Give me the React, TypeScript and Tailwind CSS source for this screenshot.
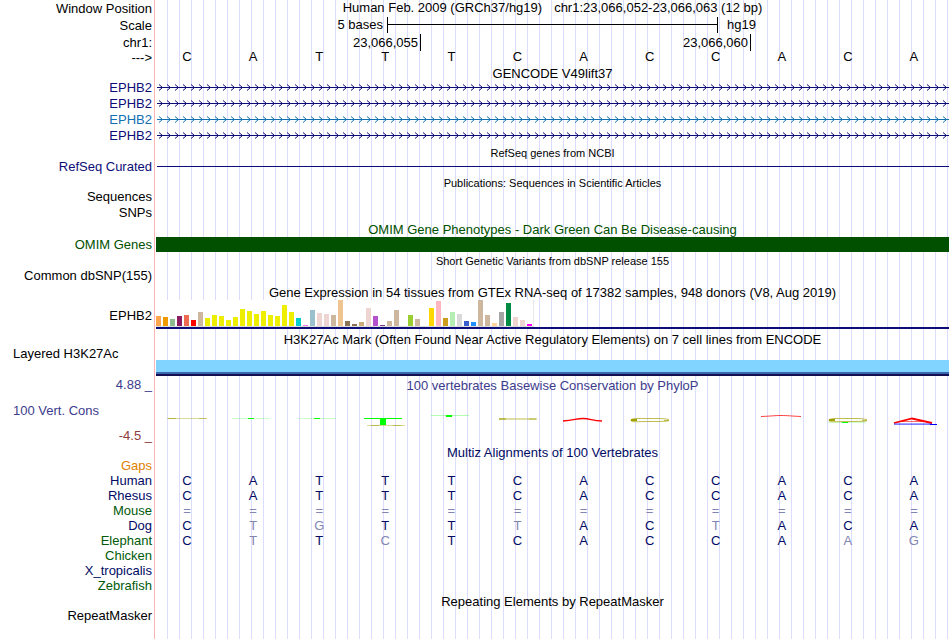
import { useId, type ReactNode } from "react";
import clsx from "clsx";

const NAVY = "#0c0c78";

const referenceBases = "CATTTCACCACA".split("");

const alignments = [
  { name: "Gaps", color: "text-[#e08000]", bases: "" },
  { name: "Human", color: "text-[#000a64]", bases: "CATTTCACCACA" },
  { name: "Rhesus", color: "text-[#000a64]", bases: "CATTTCACCACA" },
  { name: "Mouse", color: "text-[#005a0a]", bases: "============" },
  { name: "Dog", color: "text-[#000a64]", bases: "CtgTTtACtACA" },
  { name: "Elephant", color: "text-[#005a0a]", bases: "CtTcTCACCAag" },
  { name: "Chicken", color: "text-[#005a0a]", bases: "" },
  { name: "X_tropicalis", color: "text-[#000a64]", bases: "" },
  { name: "Zebrafish", color: "text-[#005a0a]", bases: "" },
];

const transcripts = [
  { color: NAVY, label: "text-[#0c0c78]" },
  { color: NAVY, label: "text-[#0c0c78]" },
  { color: "#1270b0", label: "text-[#1270b0]" },
  { color: NAVY, label: "text-[#0c0c78]" },
];

// Median expression per tissue: [colour, height in pixels]
const tissues: [string, number][] = [
  ["#ffa54f", 10], ["#ee9a00", 9], ["#8fbc8f", 7], ["#8b1c62", 10], ["#ee6a50", 11], ["#ff0000", 6],
  ["#cdb79e", 14], ["#eeee00", 8], ["#eeee00", 11], ["#eeee00", 10], ["#eeee00", 6], ["#eeee00", 9],
  ["#eeee00", 17], ["#eeee00", 15], ["#eeee00", 12], ["#eeee00", 15], ["#eeee00", 11], ["#eeee00", 10],
  ["#eeee00", 21], ["#eeee00", 14], ["#00cdcd", 8], ["#ee82ee", 1], ["#9ac0cd", 16], ["#eed5d2", 13],
  ["#eed5d2", 12], ["#cdb79e", 11], ["#eec591", 26], ["#8b7355", 5], ["#8b7355", 2], ["#cdaa7d", 4],
  ["#eed5d2", 18], ["#b452cd", 10], ["#7a378b", 1], ["#cdb79e", 5], ["#cdb79e", 16], ["#cdb79e", 0],
  ["#9acd32", 11], ["#cdb79e", 7], ["#7a67ee", 0], ["#ffd700", 18], ["#ffb6c1", 25], ["#cd9b1d", 8],
  ["#b4eeb4", 14], ["#d9d9d9", 12], ["#3a5fcd", 5], ["#1e90ff", 4], ["#cdb79e", 26], ["#cdb79e", 11],
  ["#ffd39b", 3], ["#a6a6a6", 14], ["#008b45", 23], ["#eed5d2", 9], ["#eed5d2", 6], ["#ff00ff", 2],
];

function Row({
  label,
  labelClass,
  className,
  children,
}: {
  label?: string;
  labelClass?: string;
  className: string;
  children?: ReactNode;
}) {
  return (
    <div className={clsx("flex", className)}>
      <div className={clsx("flex w-[156px] shrink-0 items-center justify-end pr-1 whitespace-pre", labelClass)}>
        {label}
      </div>
      <div className="min-w-0 flex-1">{children}</div>
    </div>
  );
}

function Title({
  children,
  small,
  height = "h-4",
  className,
  label,
  labelClass,
}: {
  children: ReactNode;
  small?: boolean;
  height?: string;
  className?: string;
  label?: string;
  labelClass?: string;
}) {
  return (
    <Row className={height} label={label} labelClass={labelClass}>
      <h2 className={clsx("text-center leading-[18px] whitespace-nowrap", small && "text-[11px]", className)}>
        {children}
      </h2>
    </Row>
  );
}

function StrandLine({ color }: { color: string }) {
  const id = useId();
  return (
    <svg className="block h-4 w-full" aria-hidden="true">
      <defs>
        <pattern id={id} x="3" y="0" width="8" height="16" patternUnits="userSpaceOnUse">
          <path d="M0 4.5l3.5 3l-3.5 3" fill="none" stroke={color} strokeWidth="1" />
        </pattern>
      </defs>
      <rect x="1" y="7" width="100%" height="1" fill={color} />
      <rect x="1" y="0" width="100%" height="16" fill={`url(#${id})`} />
    </svg>
  );
}

function ConservationLogo() {
  return (
    <svg className="block h-[35px] w-[793px] max-w-full" viewBox="0 0 793 35" aria-label="PhyloP scores per base">
      <g fill="#a0a000">
        <rect x="11" y="25" width="40" height="1" opacity="0.4" />
        <rect x="12" y="25" width="8" height="1" opacity="0.6" />
        <rect x="43" y="25" width="7" height="1" opacity="0.4" />
        <rect x="211" y="32" width="38" height="1" opacity="0.4" />
        <rect x="215" y="32" width="8" height="1" opacity="0.5" />
        <rect x="237" y="32" width="8" height="1" opacity="0.5" />
        <rect x="343" y="25" width="38" height="2" opacity="0.35" />
        <rect x="343" y="25" width="7" height="2" opacity="0.5" />
        <rect x="373" y="25" width="7" height="2" opacity="0.3" />
      </g>
      <g fill="#00ff00">
        <rect x="76" y="25" width="38" height="1" opacity="0.2" />
        <rect x="92" y="25" width="6" height="1" />
        <rect x="142" y="25" width="38" height="1" opacity="0.2" />
        <rect x="158" y="25" width="6" height="1" />
        <rect x="208" y="25" width="38" height="1" />
        <rect x="224" y="25" width="6" height="7" />
        <rect x="275" y="22" width="38" height="1" opacity="0.3" />
        <rect x="290" y="22" width="6" height="2" />
        <rect x="672" y="29" width="38" height="1" opacity="0.2" />
      </g>
      {[474, 672].map((x) => (
        <g key={x} fill="none" stroke="#a0a000" transform={`translate(${x} 0)`}>
          <path d="M1 27.5C1 25 8 25.5 19 25.5C31 25.5 37 25.5 39 27M1 27.5C1 29.5 8 28.5 19 28.5C31 28.5 38 28.5 39 27.5" opacity="0.7" />
          <path d="M1 27H7" strokeWidth="2" />
          <path d="M34 27.5H39" opacity="0.6" />
        </g>
      ))}
      <rect x="686" y="29" width="6" height="1" fill="#00ff00" />
      <g fill="none" stroke="#ff0000">
        <path d="M407 28C418 27.5 420 25.5 427 25.5S436 27.5 446 28" strokeWidth="1.3" />
        <path d="M605 23.5C618 23 618 22.5 625 22.5S634 23 645 23.5" opacity="0.75" />
        <path d="M738 30L756 25.5L776 30" strokeWidth="1.8" />
        <path d="M745 28.5H768" opacity="0.6" />
      </g>
      <path d="M738 30.5H776" stroke="#0000ff" opacity="0.35" />
      <path d="M738 31.5H781" stroke="#0000ff" opacity="0.5" />
      <path d="M774 31.5H781" stroke="#0000ff" />
    </svg>
  );
}

export default function App() {
  return (
    <main className="flex min-h-screen flex-col overflow-hidden bg-white bg-[linear-gradient(to_right,#fff_154px,#ffb4b4_154px,#ffb4b4_155px,#fff_155px,#fff_156px,transparent_156px),repeating-linear-gradient(to_right,transparent_0px,transparent_11px,#dcdcff_11px,#dcdcff_12px)] pr-px font-['Liberation_Sans',Arial,sans-serif] text-[13px] leading-4 text-black">
      <Row className="h-[17px]" label="Window Position">
        <h1 className="flex justify-center gap-3 leading-4 whitespace-nowrap">
          <span>Human Feb. 2009 (GRCh37/hg19)</span>
          <span>chr1:23,066,052-23,066,063 (12 bp)</span>
        </h1>
      </Row>
      <Row className="h-[17px]" label="Scale">
        <div className="grid h-4 grid-cols-[repeat(24,minmax(0,1fr))] pr-px">
          <span className="col-span-7 pr-1 text-right">5 bases</span>
          <div className="col-span-10 border-l border-black">
            <div className="h-2 border-b border-black" />
          </div>
          <span className="col-span-7 border-l border-black pl-[9px]">hg19</span>
        </div>
      </Row>
      <Row className="h-[17px]" label="chr1:">
        <div className="grid h-4 grid-cols-12 pr-px text-right">
          <span className="col-span-4 pr-[2px] leading-[17px]">23,066,055</span>
          <span className="col-span-5 border-l border-black pr-[2px] leading-[17px]">23,066,060</span>
          <span className="col-span-3 border-l border-black" />
        </div>
      </Row>
      <Row className="h-[14px]" label="--->">
        <div className="grid grid-cols-12 text-center leading-3">
          {referenceBases.map((b, i) => (
            <span key={i} className="pr-1">
              {b}
            </span>
          ))}
        </div>
      </Row>

      <Title height="h-[15px]">GENCODE V49lift37</Title>
      {transcripts.map((t, i) => (
        <Row key={i} className="h-4" label="EPHB2" labelClass={t.label}>
          <StrandLine color={t.color} />
        </Row>
      ))}

      <Title small height="h-[15px]">
        RefSeq genes from NCBI
      </Title>
      <Row className="h-[15px]" label="RefSeq Curated" labelClass="text-[#0c0c78]">
        <div className="ml-px h-2 border-b border-[#0c0c78]" />
      </Row>

      <Title small height="h-[15px]">
        Publications: Sequences in Scientific Articles
      </Title>
      <Row className="h-4" label="Sequences" />
      <Row className="h-4" label="SNPs" />

      <Title className="text-[#005000]">OMIM Gene Phenotypes - Dark Green Can Be Disease-causing</Title>
      <Row className="h-[15px]" label="OMIM Genes" labelClass="text-[#005000]">
        <div className="h-full bg-[#005000]" />
      </Row>

      <Title small>Short Genetic Variants from dbSNP release 155</Title>
      <Row className="h-4" label="Common dbSNP(155)" />

      <Title>Gene Expression in 54 tissues from GTEx RNA-seq of 17382 samples, 948 donors (V8, Aug 2019)</Title>
      <Row className="h-[31px]" label="EPHB2">
        <div className="flex h-[27px] w-[378px] items-end gap-[2px] border-r border-b border-[#e8e8e8] border-b-[#dcdcdc] bg-white">
          {tissues.map(([color, height], i) => (
            <div key={i} className="w-[5px] shrink-0" style={{ backgroundColor: color, height }} />
          ))}
        </div>
        <div className="h-[2px] bg-[#0c0c78]" />
      </Row>

      <Title>H3K27Ac Mark (Often Found Near Active Regulatory Elements) on 7 cell lines from ENCODE</Title>
      <div className="flex h-[30px]">
        <div className="w-[156px] shrink-0 pl-[13px] leading-[14px]">Layered H3K27Ac</div>
        <div className="flex-1 pt-[13px]">
          <div className="h-3 bg-[#80d4ff]" />
          <div className="h-[2px] bg-[#3868b0]" />
          <div className="h-[2px] bg-[#140f50]" />
        </div>
      </div>

      <Title className="text-[#3c3c8c]" label="4.88 _" labelClass="text-[#3c3c8c]">
        100 vertebrates Basewise Conservation by PhyloP
      </Title>
      <div className="flex h-[35px] items-center">
        <div className="w-[156px] shrink-0 pl-[13px] text-[#3c3c8c]">100 Vert. Cons</div>
        <div className="min-w-0 flex-1">
          <ConservationLogo />
        </div>
      </div>
      <Row className="h-4" label="-4.5 _" labelClass="text-[#8c3c3c]" />

      <Title height="h-[14px]" className="text-[#000a64]">
        Multiz Alignments of 100 Vertebrates
      </Title>
      <table className="w-full table-fixed border-collapse leading-[15px]">
        <colgroup>
          <col className="w-[156px]" />
          <col span={12} />
        </colgroup>
        <tbody>
          {alignments.map(({ name, color, bases }) => (
            <tr key={name} className="h-[15px]">
              <th scope="row" className={clsx("p-0 pr-1 text-right font-normal", color)}>
                {name}
              </th>
              {Array.from({ length: 12 }, (_, i) => {
                const base = bases[i] ?? "";
                const matches = base !== "=" && base === base.toUpperCase();
                return (
                  <td key={i} className={clsx("p-0 pr-1 text-center", matches ? "text-[#000a64]" : "text-[#8085b2]")}>
                    {base.toUpperCase()}
                  </td>
                );
              })}
            </tr>
          ))}
        </tbody>
      </table>

      <Title>Repeating Elements by RepeatMasker</Title>
      <Row className="h-[14px]" label="RepeatMasker" />
    </main>
  );
}
